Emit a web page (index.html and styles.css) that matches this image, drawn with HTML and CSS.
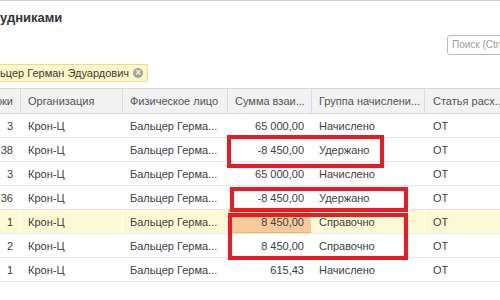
FILE: index.html
```html
<!DOCTYPE html>
<html lang="ru">
<head>
    <meta charset="UTF-8">
    <title>Взаиморасчеты с сотрудниками</title>
    <link rel="stylesheet" href="styles.css">
</head>
<body>
    <div class="form">
        <div class="form-title">удниками</div>

        <div class="search-row">
            <div class="search-box">Поиск (Ctrl+F)</div>
        </div>

        <div class="filter-row">
            <span class="filter-chip">
                ьцер Герман Эдуардович
                <span class="chip-clear">&times;</span>
            </span>
        </div>

        <div class="grid">
            <div class="grid-row grid-head">
                <div class="cell col-num">оки</div>
                <div class="cell col-org">Организация</div>
                <div class="cell col-person">Физическое лицо</div>
                <div class="cell col-sum">Сумма взаи...</div>
                <div class="cell col-group">Группа начислени...</div>
                <div class="cell col-item">Статья расх...</div>
            </div>

            <div class="grid-row">
                <div class="cell col-num">3</div>
                <div class="cell col-org">Крон-Ц</div>
                <div class="cell col-person">Бальцер Герма...</div>
                <div class="cell col-sum">65 000,00</div>
                <div class="cell col-group">Начислено</div>
                <div class="cell col-item">ОТ</div>
            </div>
            <div class="grid-row">
                <div class="cell col-num">38</div>
                <div class="cell col-org">Крон-Ц</div>
                <div class="cell col-person">Бальцер Герма...</div>
                <div class="cell col-sum">-8 450,00</div>
                <div class="cell col-group">Удержано</div>
                <div class="cell col-item">ОТ</div>
            </div>
            <div class="grid-row">
                <div class="cell col-num">3</div>
                <div class="cell col-org">Крон-Ц</div>
                <div class="cell col-person">Бальцер Герма...</div>
                <div class="cell col-sum">65 000,00</div>
                <div class="cell col-group">Начислено</div>
                <div class="cell col-item">ОТ</div>
            </div>
            <div class="grid-row">
                <div class="cell col-num">36</div>
                <div class="cell col-org">Крон-Ц</div>
                <div class="cell col-person">Бальцер Герма...</div>
                <div class="cell col-sum">-8 450,00</div>
                <div class="cell col-group">Удержано</div>
                <div class="cell col-item">ОТ</div>
            </div>
            <div class="grid-row current">
                <div class="cell col-num">1</div>
                <div class="cell col-org">Крон-Ц</div>
                <div class="cell col-person">Бальцер Герма...</div>
                <div class="cell col-sum active">8 450,00</div>
                <div class="cell col-group">Справочно</div>
                <div class="cell col-item">ОТ</div>
            </div>
            <div class="grid-row">
                <div class="cell col-num">2</div>
                <div class="cell col-org">Крон-Ц</div>
                <div class="cell col-person">Бальцер Герма...</div>
                <div class="cell col-sum">8 450,00</div>
                <div class="cell col-group">Справочно</div>
                <div class="cell col-item">ОТ</div>
            </div>
            <div class="grid-row">
                <div class="cell col-num">1</div>
                <div class="cell col-org">Крон-Ц</div>
                <div class="cell col-person">Бальцер Герма...</div>
                <div class="cell col-sum">615,43</div>
                <div class="cell col-group">Начислено</div>
                <div class="cell col-item">ОТ</div>
            </div>
        </div>

        <!-- red marks drawn over the screenshot -->
        <div class="mark mark-1"></div>
        <div class="mark mark-2"></div>
        <div class="mark mark-3"></div>
    </div>
</body>
</html>
```

FILE: styles.css
```css
html, body {
    margin: 0;
    padding: 0;
    background: #fff;
}

body {
    width: 500px;
    height: 300px;
    overflow: hidden;
    font-family: "Liberation Sans", Arial, sans-serif;
    font-size: 11px;
    color: #404040;
}

.form {
    position: relative;
    border-top: 1px solid #cfcfcf;
}

.form-title {
    height: 34px;
    line-height: 34px;
    font-size: 13px;
    font-weight: bold;
    color: #333;
    white-space: nowrap;
}

.search-row {
    height: 28px;
    padding-left: 447px;
}

.search-box {
    width: 90px;
    height: 18px;
    line-height: 18px;
    padding-left: 4px;
    border: 1px solid #b9b9b9;
    border-radius: 3px;
    color: #a39ba3;
    font-size: 10px;
    white-space: nowrap;
    overflow: hidden;
}

.filter-row {
    height: 24px;
    padding-top: 1px;
}

.filter-chip {
    display: inline-flex;
    align-items: center;
    gap: 4px;
    height: 16px;
    padding: 0 4px 0 0;
    background: #fcf7c6;
    border: 1px solid #e4dc9c;
    border-left: none;
    border-radius: 0 3px 3px 0;
    color: #3c3c3c;
    white-space: nowrap;
}

.chip-clear {
    display: inline-flex;
    align-items: center;
    justify-content: center;
    width: 10px;
    height: 10px;
    border-radius: 50%;
    background: #a3a3a3;
    color: #fcf7c6;
    font-size: 10px;
    line-height: 10px;
    font-weight: bold;
}

.grid {
    border-top: 1px solid #d8d8d8;
}

.grid-row {
    display: flex;
    height: 23px;
    border-bottom: 1px solid #e6e6e6;
}

.grid-head {
    height: 24px;
    background: #f2f2f2;
    border-bottom-color: #dadada;
    color: #555;
}

.grid-head .cell {
    border-right-color: #dcdcdc;
}

.cell {
    box-sizing: border-box;
    flex: none;
    display: flex;
    align-items: center;
    padding: 0 7px;
    border-right: 1px solid transparent;
    white-space: nowrap;
    overflow: hidden;
}

.col-num    { width: 21px; justify-content: flex-end; padding: 0 7px 0 0; }
.col-org    { width: 102px; }
.col-person { width: 105px; }
.col-sum    { width: 84px; justify-content: flex-end; }
.col-group  { width: 113px; }
.col-item   { width: 100px; padding-left: 8px; }

.grid-head .col-sum {
    justify-content: flex-start;
}

.grid-row.current {
    background: #fcfad3;
}

.grid-row.current .cell {
    border-right-color: #fffff0;
}

.cell.active {
    background: #fbca9b;
    border: 1px solid #f3b85c;
}

.mark {
    position: absolute;
    box-sizing: border-box;
    border: 4px solid #e81c25;
}

.mark-1 { left: 227px; top: 134px; width: 157px; height: 33px; }
.mark-2 { left: 230px; top: 186px; width: 178px; height: 25px; }
.mark-3 { left: 228px; top: 212px; width: 180px; height: 47px; }
```
